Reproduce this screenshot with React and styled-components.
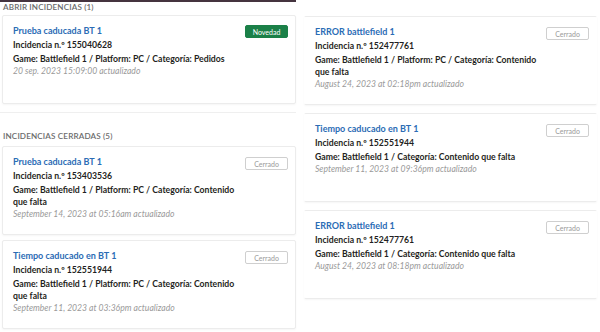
import React from "react";
import styled, { createGlobalStyle } from "styled-components";

const Global = createGlobalStyle`
  html, body { margin: 0; padding: 0; background: #fff; }
  body { font-family: Lato, "Noto Sans", sans-serif; color: #1d1d1f; }
  * { box-sizing: border-box; }
`;

const Page = styled.div`
  display: grid;
  grid-template-columns: 296px 293px;
  column-gap: 8px;
  width: 600px;
  height: 332px;
  overflow: hidden;
`;

const Column = styled.div`
  display: flex;
  flex-direction: column;
  padding-top: ${(p) => p.$pt || 0}px;
  gap: ${(p) => p.$gap || 0}px;
`;

const LeftColumn = styled.div`
  display: flex;
  flex-direction: column;
  border-top: 2px solid #45343f;
`;

const Section = styled.section`
  display: flex;
  flex-direction: column;
  padding-left: 2px;
  gap: ${(p) => p.$gap || 7}px;
  padding-bottom: ${(p) => p.$pb || 0}px;
  border-bottom: ${(p) => (p.$divider ? "1px solid #efefef" : "none")};
`;

const Heading = styled.h3`
  margin: ${(p) => p.$mt || 0}px 0 0 1px;
  font-size: 8.1px;
  line-height: 10px;
  font-weight: 600;
  color: #6b6b6b;
  letter-spacing: 0.15px;
  text-transform: uppercase;
`;

const Card = styled.article`
  height: 89px;
  display: flex;
  justify-content: space-between;
  align-items: flex-start;
  padding: 9px 7px 0 10px;
  background: #fff;
  border: 1px solid #ececec;
  border-left-color: ${(p) => (p.$open ? "#ececec" : "transparent")};
  border-right-color: ${(p) => (p.$open ? "#ececec" : "transparent")};
  box-shadow: 0 1px 2px rgba(0, 0, 0, 0.04);
  border-radius: 2px;
`;

const Body = styled.div`
  display: flex;
  flex-direction: column;
  width: 228px;
`;

const Title = styled.div`
  font-size: 9px;
  line-height: 12px;
  font-weight: 700;
  color: #2b6cb5;
  margin-bottom: 2px;
`;

const Line = styled.div`
  font-size: 8.7px;
  line-height: 12px;
  font-weight: 700;
  color: #1f1f22;
  margin-bottom: 2px;
`;

const DateLine = styled.div`
  font-size: 8.6px;
  line-height: 11px;
  font-style: italic;
  color: #9a9a9a;
  margin-top: -1px;
`;

const Badge = styled.span`
  flex: none;
  width: 43px;
  height: 13px;
  margin-top: ${(p) => (p.$new ? 0 : 1)}px;
  display: flex;
  align-items: center;
  justify-content: center;
  font-size: 7px;
  border-radius: 2px;
  background: ${(p) => (p.$new ? "#1b8048" : "#fff")};
  color: ${(p) => (p.$new ? "#fff" : "#9a9a9a")};
  border: 1px solid ${(p) => (p.$new ? "#1b8048" : "#cfcfcf")};
`;

function Incident({ title, id, game, date, isNew, open }) {
  return (
    <Card $open={open}>
      <Body>
        <Title>{title}</Title>
        <Line>Incidencia n.º {id}</Line>
        <Line>{game}</Line>
        <DateLine>{date}</DateLine>
      </Body>
      <Badge $new={isNew}>{isNew ? "Novedad" : "Cerrado"}</Badge>
    </Card>
  );
}

const G1 = "Game: Battlefield 1 / Platform: PC / Categoría: Contenido que falta";
const G2 = "Game: Battlefield 1 / Categoría: Contenido que falta";

export default function App() {
  return (
    <>
      <Global />
      <Page>
        <LeftColumn>
          <Section $divider $pb={8} $gap={3}>
            <Heading $mt={0}>Abrir incidencias (1)</Heading>
            <Incident
              open
              isNew
              title="Prueba caducada BT 1"
              id="155040628"
              game="Game: Battlefield 1 / Platform: PC / Categoría: Pedidos"
              date="20 sep. 2023 15:09:00 actualizado"
            />
          </Section>
          <Section $gap={5}>
            <Heading $mt={18}>Incidencias cerradas (5)</Heading>
            <Incident
              open
              title="Prueba caducada BT 1"
              id="153403536"
              game={G1}
              date="September 14, 2023 at 05:16am actualizado"
            />
            <Incident
              open
              title="Tiempo caducado en BT 1"
              id="152551944"
              game={G1}
              date="September 11, 2023 at 03:36pm actualizado"
            />
          </Section>
        </LeftColumn>
        <Column $pt={16} $gap={8}>
          <Incident
            title="ERROR battlefield 1"
            id="152477761"
            game={G1}
            date="August 24, 2023 at 02:18pm actualizado"
          />
          <Incident
            title="Tiempo caducado en BT 1"
            id="152551944"
            game={G2}
            date="September 11, 2023 at 09:36pm actualizado"
          />
          <Incident
            title="ERROR battlefield 1"
            id="152477761"
            game={G2}
            date="August 24, 2023 at 08:18pm actualizado"
          />
        </Column>
      </Page>
    </>
  );
}
